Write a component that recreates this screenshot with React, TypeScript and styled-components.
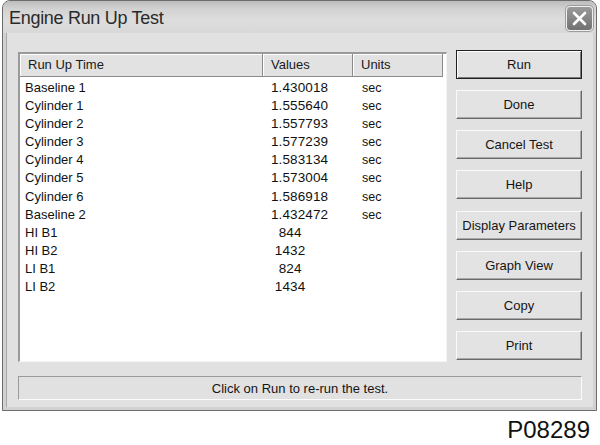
import React from "react";
import styled, { createGlobalStyle } from "styled-components";

const Global = createGlobalStyle`
  html, body { margin: 0; padding: 0; background: #ffffff; }
  body { font-family: "Liberation Sans", Arial, sans-serif; color: #111; }
`;

const Page = styled.div`
  width: 600px;
  height: 445px;
  display: flex;
  flex-direction: column;
`;

const Window = styled.div`
  margin-left: 2px;
  width: 593px;
  border: 1px solid #6c6c6c;
  border-radius: 8px 8px 0 0;
  overflow: hidden;
  background: #d2d2d2;
`;

const TitleBar = styled.div`
  height: 32px;
  display: flex;
  align-items: center;
  justify-content: space-between;
  padding: 0 3px 0 6px;
  background: linear-gradient(
    to bottom,
    #bcbcbc 0%,
    #d2d2d2 25%,
    #dddddd 60%,
    #d8d8d8 100%
  );
`;

const Title = styled.span`
  font-size: 18px;
  color: #2a2a2a;
  letter-spacing: -0.3px;
  padding-top: 2px;
`;

const CloseButton = styled.div`
  width: 25px;
  height: 23px;
  margin-top: 3px;
  border: 1px solid #f0f0f0;
  border-radius: 4px;
  background: linear-gradient(to bottom, #9a9a9a, #727272);
  display: flex;
  align-items: center;
  justify-content: center;
  box-shadow: 0 0 0 1px #9c9c9c;
`;

const Frame = styled.div`
  border: 3px solid #d2d2d2;
  border-top: none;
`;

const Client = styled.div`
  background: #e1e1e1;
  border-left: 1px solid #a8a8a8;
  padding: 17px 11px 7px 11px;
  display: flex;
  flex-direction: column;
`;

const MainRow = styled.div`
  display: grid;
  grid-template-columns: 429px 126px;
  column-gap: 9px;
  align-items: start;
`;

const ListBox = styled.div`
  margin-top: 2px;
  height: 310px;
  box-sizing: border-box;
  background: #ffffff;
  border-style: solid;
  border-width: 2px 1px 1px 2px;
  border-color: #9a9a9a #f4f4f4 #f4f4f4 #9a9a9a;
  display: flex;
  flex-direction: column;
`;

const HeaderRow = styled.div`
  display: grid;
  grid-template-columns: 243px 90px 90px;
  height: 23px;
`;

const HeaderCell = styled.div`
  box-sizing: border-box;
  background: #e2e2e2;
  border-right: 1px solid #8a8a8a;
  border-bottom: 1px solid #8a8a8a;
  box-shadow: inset 1px 1px 0 #ffffff;
  font-size: 13px;
  line-height: 22px;
  padding-left: 8px;
  color: #1a1a1a;
`;

const Rows = styled.div`
  padding-top: 2px;
`;

const Row = styled.div`
  display: grid;
  grid-template-columns: 243px 90px 90px;
  height: 18.1px;
  font-size: 13px;
  line-height: 18px;
`;

const NameCell = styled.div`
  padding-left: 5px;
`;

const ValueCell = styled.div`
  padding-left: 8px;
  white-space: pre;
  font-size: 13.5px;
  letter-spacing: 0.1px;
`;

const UnitCell = styled.div`
  padding-left: 9px;
  font-size: 12.5px;
`;

const ButtonColumn = styled.div`
  height: 310px;
  display: flex;
  flex-direction: column;
  justify-content: space-between;
`;

const Button = styled.div<{ $default?: boolean }>`
  box-sizing: border-box;
  height: 29px;
  display: flex;
  align-items: center;
  justify-content: center;
  background: #e3e3e3;
  font-size: 13px;
  color: #151515;
  border-style: solid;
  border-width: 1px;
  border-color: ${(p) =>
    p.$default ? "#202020" : "#fafafa #6a6a6a #6a6a6a #fafafa"};
  box-shadow: ${(p) =>
    p.$default
      ? "inset 1px 1px 0 #ffffff, inset -1px -1px 0 #7a7a7a"
      : "inset -1px -1px 0 #a8a8a8"};
`;

const StatusBar = styled.div`
  margin-top: 14px;
  height: 24px;
  box-sizing: border-box;
  border-style: solid;
  border-width: 1px;
  border-color: #9a9a9a #fbfbfb #fbfbfb #9a9a9a;
  background: #e1e1e1;
  display: flex;
  align-items: center;
  justify-content: center;
  font-size: 13px;
  color: #151515;
`;

const Caption = styled.div`
  margin-top: 5px;
  padding-right: 10px;
  text-align: right;
  font-size: 24px;
  color: #111;
`;

const rows: [string, string, string][] = [
  ["Baseline 1", "1.430018", "sec"],
  ["Cylinder 1", "1.555640", "sec"],
  ["Cylinder 2", "1.557793", "sec"],
  ["Cylinder 3", "1.577239", "sec"],
  ["Cylinder 4", "1.583134", "sec"],
  ["Cylinder 5", "1.573004", "sec"],
  ["Cylinder 6", "1.586918", "sec"],
  ["Baseline 2", "1.432472", "sec"],
  ["HI B1", "  844", ""],
  ["HI B2", " 1432", ""],
  ["LI B1", "  824", ""],
  ["LI B2", " 1434", ""],
];

const buttons = [
  "Run",
  "Done",
  "Cancel Test",
  "Help",
  "Display Parameters",
  "Graph View",
  "Copy",
  "Print",
];

export default function App() {
  return (
    <Page>
      <Global />
      <Window>
        <TitleBar>
          <Title>Engine Run Up Test</Title>
          <CloseButton>
            <svg width="15" height="15" viewBox="0 0 15 15">
              <path
                d="M2 2 L13 13 M13 2 L2 13"
                stroke="#ffffff"
                strokeWidth="2.6"
                strokeLinecap="round"
              />
            </svg>
          </CloseButton>
        </TitleBar>
        <Frame>
          <Client>
            <MainRow>
              <ListBox>
                <HeaderRow>
                  <HeaderCell>Run Up Time</HeaderCell>
                  <HeaderCell>Values</HeaderCell>
                  <HeaderCell>Units</HeaderCell>
                </HeaderRow>
                <Rows>
                  {rows.map(([n, v, u]) => (
                    <Row key={n}>
                      <NameCell>{n}</NameCell>
                      <ValueCell>{v}</ValueCell>
                      <UnitCell>{u}</UnitCell>
                    </Row>
                  ))}
                </Rows>
              </ListBox>
              <ButtonColumn>
                {buttons.map((b, i) => (
                  <Button key={b} $default={i === 0}>
                    {b}
                  </Button>
                ))}
              </ButtonColumn>
            </MainRow>
            <StatusBar>Click on Run to re-run the test.</StatusBar>
          </Client>
        </Frame>
      </Window>
      <Caption>P08289</Caption>
    </Page>
  );
}
